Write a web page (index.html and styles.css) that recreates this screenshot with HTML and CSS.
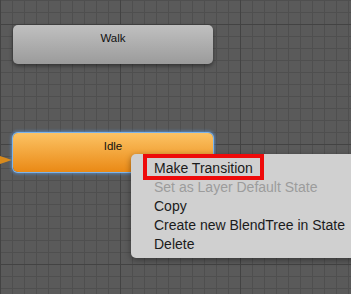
FILE: index.html
```html
<!DOCTYPE html>
<html>
<head>
<meta charset="utf-8">
<link rel="stylesheet" href="styles.css">
</head>
<body>
<div class="canvas">
  <svg class="entry-arrow" width="14" height="12" viewBox="0 0 14 12"><polygon points="0,2 12,6 0,10" fill="#d88a1c"/></svg>
  <div class="node node-walk">Walk</div>
  <div class="node node-idle">Idle</div>
  <ul class="menu">
    <li class="item item-hl">Make Transition</li>
    <li class="item disabled">Set as Layer Default State</li>
    <li class="item">Copy</li>
    <li class="item">Create new BlendTree in State</li>
    <li class="item">Delete</li>
  </ul>
</div>
</body>
</html>
```
FILE: styles.css
```css
html, body {
  margin: 0;
  padding: 0;
  width: 351px;
  height: 294px;
  overflow: hidden;
}
.canvas {
  position: relative;
  width: 351px;
  height: 294px;
  overflow: hidden;
  background-color: #5a5a5a;
  background-image:
    linear-gradient(to right, #434343 1px, transparent 1px),
    linear-gradient(to bottom, #434343 1px, transparent 1px),
    linear-gradient(to right, #4f4f4f 1px, transparent 1px),
    linear-gradient(to bottom, #4f4f4f 1px, transparent 1px);
  background-size: 120px 120px, 120px 120px, 12px 12px, 12px 12px;
  background-position: 0 0, 0 24px, 0 0, 0 0;
}
.node {
  position: absolute;
  left: 13px;
  width: 200px;
  height: 39px;
  box-sizing: border-box;
  border-radius: 5px;
  text-align: center;
  font-family: "Liberation Sans", Arial, sans-serif;
  font-size: 11.5px;
  line-height: 13px;
  padding-top: 7px;
  color: #111;
}
.node-walk {
  top: 25px;
  background: linear-gradient(to bottom, #c0c0c0, #9b9b9b);
  box-shadow: 0 2px 4px rgba(0,0,0,0.45);
}
.node-idle {
  top: 133px;
  background: linear-gradient(to bottom, #fcc364, #ea8915);
  box-shadow: 0 0 0 1px #7db4ea, 0 0 3px 2px rgba(90,150,220,0.7);
}
.entry-arrow {
  position: absolute;
  left: 0;
  top: 154px;
}
.menu {
  position: absolute;
  left: 131px;
  top: 154px;
  width: 240px;
  margin: 0;
  padding: 5px 0 4px 0;
  list-style: none;
  background: #d0d0d0;
  border-radius: 5px;
  box-shadow: 0 2px 6px rgba(0,0,0,0.4);
  font-family: "Liberation Sans", Arial, sans-serif;
  font-size: 14px;
  line-height: 19px;
  color: #1b1b1b;
}
.item {
  position: relative;
  padding-left: 23px;
  white-space: nowrap;
}
.item.disabled {
  color: #9c9c9c;
}
.item-hl::after {
  content: "";
  position: absolute;
  left: 12px;
  top: -5px;
  width: 121px;
  height: 26px;
  box-sizing: border-box;
  border: 4px solid #ee0a0a;
}
```
